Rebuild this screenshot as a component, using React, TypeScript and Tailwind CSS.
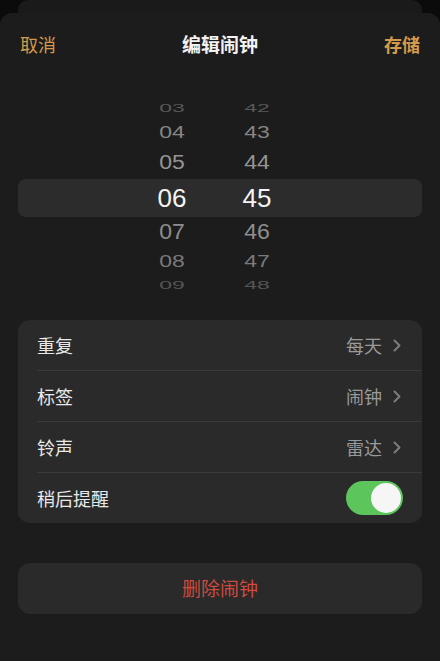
import React from 'react';

const hours = [
  { h: '03', m: '42', box: 'h-[22px]', cls: 'text-[#585858] scale-y-[0.5]' },
  { h: '04', m: '43', box: 'h-[27px]', cls: 'text-[#858585] scale-y-[0.75]' },
  { h: '05', m: '44', box: 'h-[33px]', cls: 'text-[#959595] scale-y-[0.9]' },
];

const after = [
  { h: '07', m: '46', box: 'h-[31px]', cls: 'text-[#8e8e8e] scale-y-[0.92]' },
  { h: '08', m: '47', box: 'h-[27px]', cls: 'text-[#7a7a7a] scale-y-[0.75]' },
  { h: '09', m: '48', box: 'h-[21px]', cls: 'text-[#555555] scale-y-[0.45]' },
];

function PickerRow({ h, m, box, cls }: { h: string; m: string; box: string; cls: string }) {
  return (
    <div className={`flex items-center pl-[147px] gap-[35px] ${box}`}>
      <div className={`w-[50px] text-center text-[23px] leading-none ${cls}`}>{h}</div>
      <div className={`w-[50px] text-center text-[23px] leading-none ${cls}`}>{m}</div>
    </div>
  );
}

function Chevron() {
  return (
    <svg width="8" height="13" viewBox="0 0 8 13" fill="none">
      <path d="M1.5 1.5l5 5-5 5" stroke="#7c7c7c" strokeWidth="2" strokeLinecap="round" strokeLinejoin="round" />
    </svg>
  );
}

const rows = [
  { label: '重复', value: '每天' },
  { label: '标签', value: '闹钟' },
  { label: '铃声', value: '雷达' },
];

export default function App() {
  return (
    <div className="min-h-[661px] w-[440px] flex flex-col bg-[#0b0b0b] font-['Noto_Sans_CJK_SC',sans-serif]">
      <div className="h-[13px] px-[18px] shrink-0">
        <div className="h-full bg-[#1a1a1a] rounded-t-[10px]" />
      </div>
      <div className="flex-1 bg-[#1c1c1c] rounded-t-[12px] flex flex-col">
        <div className="h-[62px] px-[20px] flex items-center justify-between text-[18px]">
          <span className="text-[#d49a4c]">取消</span>
          <span className="text-[#f2f2f2] font-bold text-[19px]">编辑闹钟</span>
          <span className="text-[#d49a4c] font-bold">存储</span>
        </div>

        <div className="mt-[22px] font-['Liberation_Sans',sans-serif]">
          {hours.map(r => (
            <PickerRow key={r.h} {...r} />
          ))}
          <div className="mx-[18px] h-[38px] rounded-[8px] bg-[#2c2c2c] flex items-center pl-[129px] gap-[35px]">
            <div className="w-[50px] text-center text-[26px] leading-none text-[#f4f4f4]">06</div>
            <div className="w-[50px] text-center text-[26px] leading-none text-[#f4f4f4]">45</div>
          </div>
          {after.map(r => (
            <PickerRow key={r.h} {...r} />
          ))}
        </div>

        <div className="mt-[24px] mx-[18px] rounded-[12px] bg-[#2a2a2a] overflow-hidden">
          {rows.map(r => (
            <div key={r.label} className="pl-[19px]">
              <div className="h-[51px] flex items-center justify-between pr-[21px] border-b border-[#3a3a3a]">
                <span className="text-[18px] text-[#e8e8e8]">{r.label}</span>
                <div className="flex items-center gap-[11px]">
                  <span className="text-[18px] text-[#9a9a9a]">{r.value}</span>
                  <Chevron />
                </div>
              </div>
            </div>
          ))}
          <div className="h-[50px] pl-[19px] pr-[19px] flex items-center justify-between">
            <span className="text-[18px] text-[#e8e8e8]">稍后提醒</span>
            <div className="w-[57px] h-[34px] rounded-full bg-[#5cc55c] flex items-center justify-end pr-[2px]">
              <div className="w-[30px] h-[30px] rounded-full bg-[#f6f6f6]" />
            </div>
          </div>
        </div>

        <div className="mt-[40px] mx-[18px] h-[51px] rounded-[12px] bg-[#2a2a2a] flex items-center justify-center">
          <span className="text-[19px] text-[#cc4a3e]">删除闹钟</span>
        </div>
      </div>
    </div>
  );
}
